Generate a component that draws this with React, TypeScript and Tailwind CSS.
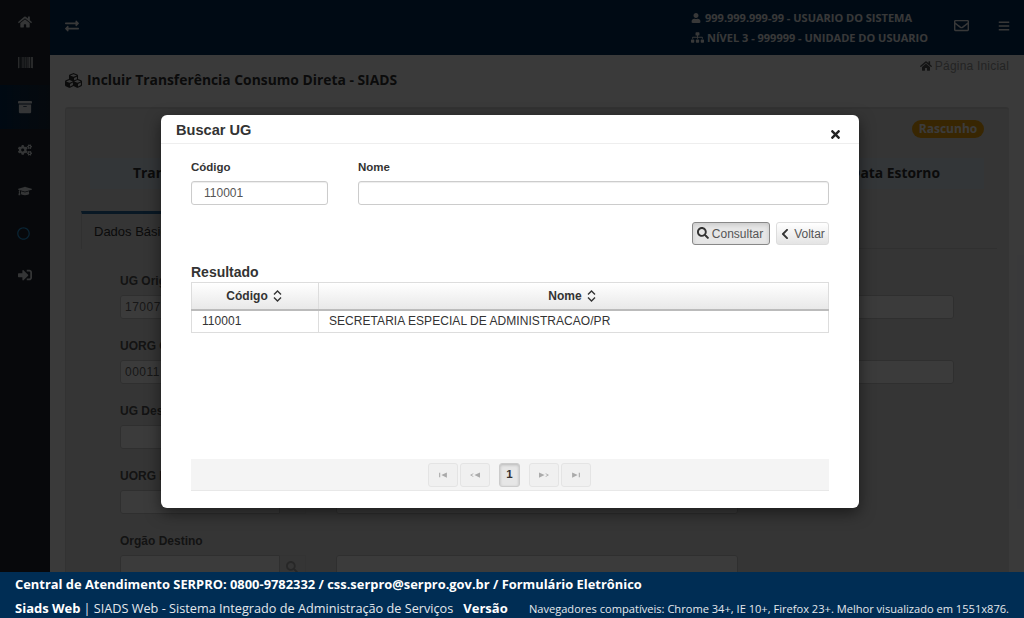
import {
  FaArchive,
  FaBars,
  FaBarcode,
  FaChevronLeft,
  FaCogs,
  FaCubes,
  FaExchangeAlt,
  FaGraduationCap,
  FaHome,
  FaRegCircle,
  FaRegEnvelope,
  FaSearch,
  FaSignInAlt,
  FaSitemap,
  FaTimes,
  FaUser,
} from "react-icons/fa";

function SortIcon() {
  return (
    <svg width="9" height="12" viewBox="0 0 9 12" fill="none" stroke="#333" strokeWidth="1.4" className="inline-block">
      <path d="M1 4.5 L4.5 1 L8 4.5" />
      <path d="M1 7.5 L4.5 11 L8 7.5" />
    </svg>
  );
}

function SeekIcon({ kind }: { kind: "first" | "prev" | "next" | "end" }) {
  const paths = {
    first: "M1 1v6h1V1zM3 4l5-3.5V7.500z",
    prev: "M0 4l3-2.500v1L1.500 4 3 5.500v1zM4 4l5-3.500v7z",
    next: "M0 .5v7l5-3.500zM6 1.500v1L7.500 4 6 5.500v1L9 4z",
    end: "M1 .5v7l5-3.500zM7 1v6h1V1z",
  };
  return (
    <svg width="10" height="6" viewBox="0 0 9 8" preserveAspectRatio="none" fill="#aaa">
      <path d={paths[kind]} />
    </svg>
  );
}

function PageButton({ kind }: { kind: "first" | "prev" | "next" | "end" }) {
  return (
    <div className="flex h-[24px] w-[30px] items-center justify-center rounded-[3px] border border-[#e4e4e4] bg-[#f0f0f0]">
      <SeekIcon kind={kind} />
    </div>
  );
}

function BackRow({ label, value, right }: { label: string; value?: string; right: string }) {
  return (
    <div className="h-[65px]">
      <div className="h-[22px] pt-[1px] text-[12px] font-bold leading-[14px] text-[#555]">{label}</div>
      <div className="flex h-[24px]">
        <div className="w-[160px] rounded-l-[3px] border border-[#ccc] bg-white pl-[4px] text-[12px] leading-[22px] tracking-[0.5px] text-[#666]">
          {value}
        </div>
        <div className="flex w-[26px] items-center justify-center border-y border-r border-[#ddd] pr-[2px]">
          <FaSearch className="text-[12px] text-[#aaa]" />
        </div>
        <div className={`ml-[30px] rounded-[3px] border border-[#ccc] bg-white ${right}`} />
      </div>
    </div>
  );
}

function Background() {
  return (
    <div className="flex h-[572px] overflow-hidden">
      {/* Sidebar */}
      <aside className="flex w-[50px] shrink-0 flex-col bg-[#1e2630] text-[14px] text-[#dfe3e8]">
        <div className="flex h-[43px] items-center justify-center pr-[1px] pt-[1px]"><FaHome /></div>
        <div className="flex h-[38px] items-center justify-center text-[15px]"><FaBarcode /></div>
        <div className="mt-[4px] flex h-[44px] items-center justify-center bg-gradient-to-r from-[#002a52] to-[#1a2a3a]"><FaArchive /></div>
        <div className="flex h-[41px] items-center justify-center"><FaCogs /></div>
        <div className="flex h-[41px] items-center justify-center"><FaGraduationCap /></div>
        <div className="flex h-[44px] items-center justify-center pr-[3px] text-[#2a9ae0]"><FaRegCircle className="text-[13px]" /></div>
        <div className="flex h-[40px] items-center justify-center"><FaSignInAlt /></div>
      </aside>

      <div className="flex min-w-0 flex-1 flex-col bg-[#f8f9fa]">
        {/* Header */}
        <header className="flex h-[55px] shrink-0 items-center bg-[#002c58] pl-[15px] pr-[14px] text-[#f2f2f2]">
          <FaExchangeAlt className="-mt-[4px] text-[14px]" />
          <div className="ml-auto font-['Open_Sans',sans-serif] text-[11px] font-bold leading-[20px]">
            <div className="flex items-center gap-[4px]"><FaUser className="text-[10px]" />999.999.999-99 - USUARIO DO SISTEMA</div>
            <div className="flex items-center gap-[3px]"><FaSitemap className="text-[13px]" />NÍVEL 3 - 999999 - UNIDADE DO USUARIO</div>
          </div>
          <FaRegEnvelope className="-mt-[4px] ml-[26px] text-[15px]" />
          <FaBars className="-mt-[4px] ml-[29px] text-[12px]" />
        </header>

        <div className="flex h-[52px] shrink-0 items-start justify-between pl-[15px] pr-[15px]">
          <div className="mt-[15px] flex items-center gap-[5px] font-['Open_Sans',sans-serif] text-[13.850px] font-bold leading-[20px] text-[#333]">
            <FaCubes className="text-[17px]" />
            Incluir Transferência Consumo Direta - SIADS
          </div>
          <div className="mt-[3px] flex items-center gap-[3px] font-['Liberation_Sans',sans-serif] text-[12px] leading-[16px] tracking-[0.2px] text-[#999]">
            <FaHome className="text-[12px] text-[#555]" />
            Página Inicial
          </div>
        </div>

        {/* Card */}
        <div className="ml-[15px] mr-[15px] flex-1 rounded-[3px] border-t-[2px] border-l border-[#d8d8d8] bg-[#e4e4e4] pl-[15px] pr-[25px]">
          <div className="flex justify-end pt-[11px]">
            <div className="h-[18px] w-[72px] rounded-full bg-[#f0a30a] text-center font-['Open_Sans',sans-serif] text-[12px] font-bold leading-[18px] text-white">
              Rascunho
            </div>
          </div>
          <div className="ml-[9px] mt-[20px] flex h-[31px] items-center justify-between bg-[#dbe8f2] pl-[43px] pr-[44px] font-['Open_Sans',sans-serif] text-[13.850px] font-bold text-[#333]">
            <span>Transferência</span>
            <span>Data Estorno</span>
          </div>
          <div className="-mr-[13px] mt-[22px] h-[38px] border-b border-[#cfcfcf]">
            <div className="h-[38px] w-[120px] border-x border-t-[3px] border-[#cfcfcf] border-t-[#2a6a9a] bg-[#e4e4e4] pl-[12px] font-['Liberation_Sans',sans-serif] text-[13px] leading-[36px] text-[#333]">
              Dados Básicos
            </div>
          </div>
          <div className="ml-[39px] mt-[24px] font-['Liberation_Sans',sans-serif]">
            <BackRow label="UG Origem" value="17007" right="w-[618px]" />
            <BackRow label="UORG Origem" value="00011" right="w-[618px]" />
            <BackRow label="UG Destino" right="w-[402px]" />
            <BackRow label="UORG Destino" right="w-[402px]" />
            <BackRow label="Orgão Destino" right="w-[402px]" />
          </div>
        </div>
      </div>
    </div>
  );
}

function Modal() {
  return (
    <div className="ml-[161px] mt-[115px] w-[698px] rounded-[6px] bg-white font-['Liberation_Sans',sans-serif] text-[#333] shadow-[0_5px_15px_rgba(0,0,0,0.5)]">
      <div className="flex h-[29px] items-start justify-between border-b border-[#eee] pl-[15px] pr-[17px]">
        <h4 className="mt-[6px] text-[14.600px] font-bold leading-[18px]">Buscar UG</h4>
        <FaTimes className="mt-[13px] text-[13px] text-[#222]" />
      </div>

      <div className="px-[30px] pb-[17px]">
        <div className="grid grid-cols-[137px_1fr] gap-x-[30px] pt-[16px]">
          <label className="h-[21px] text-[11.500px] font-bold leading-[15px]">Código</label>
          <label className="h-[21px] text-[11.500px] font-bold leading-[15px]">Nome</label>
          <div className="h-[24px] rounded-[3px] border border-[#ccc] bg-white pl-[12px] text-[12px] leading-[22px] text-[#555] shadow-[inset_0_1px_1px_rgba(0,0,0,0.075)]">
            110001
          </div>
          <div className="h-[24px] rounded-[3px] border border-[#ccc] bg-white shadow-[inset_0_1px_1px_rgba(0,0,0,0.075)]" />
        </div>

        <div className="mt-[17px] flex h-[23px] justify-end gap-[6px] text-[12px]">
          <button className="flex w-[78px] items-center justify-center gap-[3px] rounded-[3px] border border-[#888] bg-[#e6e6e6] pr-[2px] text-[#555] shadow-[inset_0_2px_4px_rgba(0,0,0,0.125)]">
            <FaSearch className="-mt-[2px] text-[12px] text-[#333]" />
            <span className="pt-[1px]">Consultar</span>
          </button>
          <button className="flex w-[53px] items-center justify-center gap-[3px] rounded-[3px] border border-[#ddd] bg-gradient-to-b from-white to-[#e4e4e4] pr-[1px] text-[#555]">
            <FaChevronLeft className="text-[12px] text-[#333]" />
            Voltar
          </button>
        </div>

        <h5 className="mt-[18px] text-[14px] font-bold leading-[19px]">Resultado</h5>
        <table className="w-full table-fixed border-collapse text-[12px] tracking-[0.05px]">
          <thead>
            <tr className="h-[27px] bg-gradient-to-b from-white to-[#e8e8e8]">
              <th className="w-[127px] border border-b-2 border-[#ddd] border-b-[#bbb] p-0 font-bold">
                <span className="inline-flex items-center gap-[5px] pr-[2px]">Código <SortIcon /></span>
              </th>
              <th className="border border-b-2 border-[#ddd] border-b-[#bbb] p-0 font-bold">
                <span className="inline-flex items-center gap-[5px] pr-[3px]">Nome <SortIcon /></span>
              </th>
            </tr>
          </thead>
          <tbody>
            <tr className="h-[23px]">
              <td className="border border-[#ddd] py-0 pl-[10px]">110001</td>
              <td className="border border-[#ddd] py-0 pl-[10px]">SECRETARIA ESPECIAL DE ADMINISTRACAO/PR</td>
            </tr>
          </tbody>
        </table>

        <div className="mt-[126px] flex h-[32px] items-center justify-center border-b border-[#e8e8e8] bg-[#f4f4f4] pr-[1px]">
          <div className="flex gap-[2px]">
            <PageButton kind="first" />
            <PageButton kind="prev" />
          </div>
          <div className="mx-[9px] flex h-[24px] w-[21px] items-center justify-center rounded-[3px] border border-[#ccc] bg-[#e6e6e6] text-[11.500px] font-bold shadow-[inset_0_1px_3px_rgba(0,0,0,0.2)]">
            1
          </div>
          <div className="flex gap-[2px]">
            <PageButton kind="next" />
            <PageButton kind="end" />
          </div>
        </div>
      </div>
    </div>
  );
}

export default function App() {
  return (
    <div className="relative h-[618px] w-[1024px] overflow-hidden">
      <Background />

      {/* Backdrop + dialog */}
      <div className="absolute inset-0 bg-black/[0.77]">
        <Modal />
      </div>

      <footer className="relative h-[46px] bg-[#002d54] pl-[15px] pr-[15px] font-['Open_Sans',sans-serif] text-white">
        <div className="pt-[3px] text-[12.900px] font-bold leading-[18px]">
          Central de Atendimento SERPRO: 0800-9782332 / css.serpro@serpro.gov.br / Formulário Eletrônico
        </div>
        <div className="mt-[6px] flex items-baseline leading-[18px]">
          <span className="text-[13px] font-bold">Siads Web</span>
          <span className="ml-[3px] text-[12.700px] text-[#e4e8ec]">| SIADS Web - Sistema Integrado de Administração de Serviços</span>
          <span className="ml-[10px] text-[13px] font-bold">Versão</span>
          <span className="ml-auto text-[11.100px] text-[#e4e8ec]">Navegadores compatíveis: Chrome 34+, IE 10+, Firefox 23+. Melhor visualizado em 1551x876.</span>
        </div>
      </footer>
    </div>
  );
}
